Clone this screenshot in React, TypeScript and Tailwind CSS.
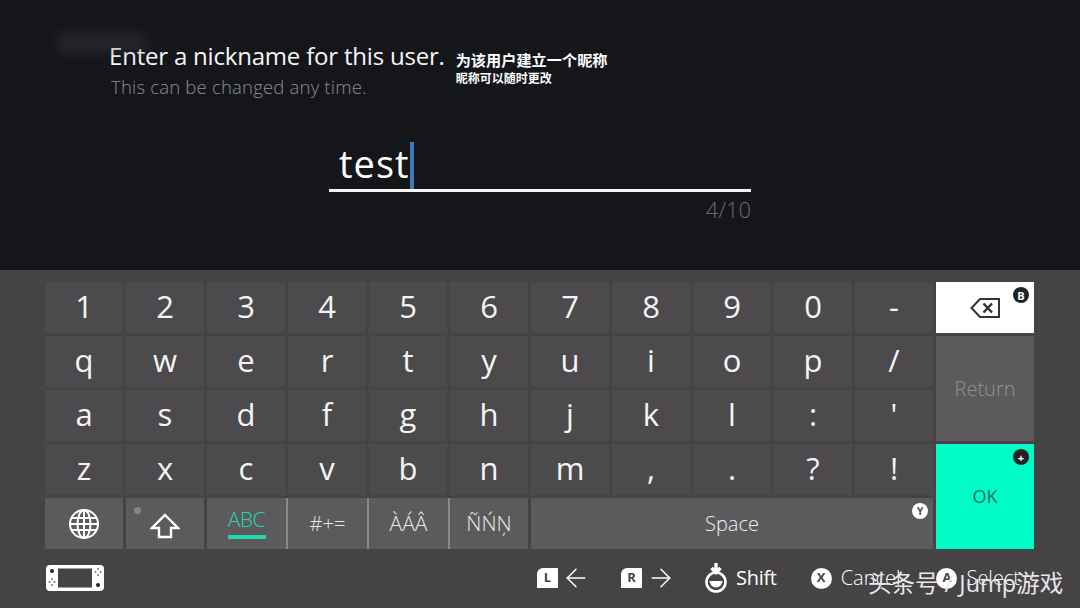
import { ArrowLeft, ArrowRight } from 'lucide-react'
import type { ReactNode } from 'react'

const SANS = "font-['Open_Sans','Noto_Sans_CJK_SC',sans-serif]"

const ROWS = [
  ['1', '2', '3', '4', '5', '6', '7', '8', '9', '0', '-'],
  ['q', 'w', 'e', 'r', 't', 'y', 'u', 'i', 'o', 'p', '/'],
  ['a', 's', 'd', 'f', 'g', 'h', 'j', 'k', 'l', ':', "'"],
  ['z', 'x', 'c', 'v', 'b', 'n', 'm', ',', '.', '?', '!'],
]

function Badge({ children }: { children: ReactNode }) {
  return (
    <span className="absolute top-[5px] right-[5px] w-4 h-4 rounded-full flex items-center justify-center text-[11px] font-bold leading-none bg-[#1c2426] text-white">
      {children}
    </span>
  )
}

function GlobeIcon() {
  return (
    <svg width="30" height="30" viewBox="0 0 30 30" fill="none" stroke="white" strokeWidth="2">
      <circle cx="15" cy="15" r="14" />
      <ellipse cx="15" cy="15" rx="6.5" ry="14" />
      <path d="M15 1v28M2.5 9h25M1 15h28M2.5 21h25" />
    </svg>
  )
}

function ShiftIcon() {
  return (
    <svg width="30" height="26" viewBox="0 0 30 26" fill="none" stroke="white" strokeWidth="2.4">
      <path d="M15 2 L28 15 H21 V24 H9 V15 H2 Z" strokeLinejoin="miter" />
    </svg>
  )
}

function BackspaceIcon() {
  return (
    <svg width="30" height="20" viewBox="0 0 30 20" fill="none" stroke="#333335" strokeWidth="2">
      <path d="M1.5 10 L10 1 H29 V19 H10 Z" strokeLinejoin="miter" />
      <path d="M13.5 5.5 L22 14.5 M22 5.5 L13.5 14.5" strokeWidth="2.4" />
    </svg>
  )
}

function ConsoleIcon() {
  return (
    <svg width="58" height="26" viewBox="0 0 58 26">
      <rect x="0" y="0" width="58" height="26" rx="4" fill="white" />
      <rect x="12" y="3.5" width="34" height="19" fill="#454345" />
      <circle cx="6" cy="6" r="2" fill="#222" />
      <circle cx="52" cy="20" r="2" fill="#222" />
      <g fill="#777">
        <circle cx="6" cy="14" r="1" />
        <circle cx="6" cy="20" r="1" />
        <circle cx="3.5" cy="17" r="1" />
        <circle cx="8.5" cy="17" r="1" />
        <circle cx="52" cy="4" r="1" />
        <circle cx="52" cy="10" r="1" />
        <circle cx="49.5" cy="7" r="1" />
        <circle cx="54.5" cy="7" r="1" />
      </g>
    </svg>
  )
}

function PlusIcon() {
  return (
    <svg width="22" height="30" viewBox="0 0 22 30" fill="none">
      <path d="M11 0v8M6.5 5 11 9.5 15.5 5" stroke="white" strokeWidth="3.4" />
      <circle cx="11" cy="19" r="9.5" stroke="white" strokeWidth="2.6" />
      <path d="M4.5 18a6.5 6.5 0 0 0 13 0z" fill="white" />
    </svg>
  )
}

function Shoulder({ label }: { label: string }) {
  return (
    <span className="w-[21px] h-[20px] bg-white rounded-tl-[6px] rounded-tr-[1px] flex items-center justify-center text-[13px] font-bold text-[#454345]">
      {label}
    </span>
  )
}

function Round({ label }: { label: string }) {
  return (
    <span className="w-[21px] h-[21px] rounded-full bg-white flex items-center justify-center text-[13px] font-bold text-[#454345]">
      {label}
    </span>
  )
}

function ModeKey({ children, className = '' }: { children: ReactNode; className?: string }) {
  return (
    <div className={`h-[51px] w-[81px] bg-[#5c5a5d] flex items-center justify-center text-[#e8e8e8] border-r-2 border-[#8a888b] ${className}`}>
      {children}
    </div>
  )
}

export default function App() {
  return (
    <div className={`relative w-[1080px] h-[608px] overflow-hidden bg-[#454345] text-white ${SANS}`}>
      <div className="relative h-[270px] bg-[#14161a] pt-[38px]">
        <div className="absolute left-[58px] top-[33px] w-[88px] h-5 bg-[#4a4a4a] opacity-30 blur-[6px]" />
        <div className="pl-[109px] flex items-start">
          <div>
            <div className="text-[24px] leading-[36px] tracking-[-0.2px] text-[#f6f6f6]">Enter a nickname for this user.</div>
            <div className="pl-[2px] text-[18.5px] leading-[26px] font-light tracking-[0.2px] text-[#8e8e90]">This can be changed any time.</div>
          </div>
          <div className="ml-[11px] pt-[12px] font-bold">
            <div className="text-[15.2px] leading-[20px]">为该用户建立一个昵称</div>
            <div className="text-[12px] leading-[16px] mt-[1px]">昵称可以随时更改</div>
          </div>
        </div>
        <div className="ml-[329px] mt-[37px] w-[422px]">
          <div className="h-[55px] border-b-[3px] border-[#f4f4f4] pl-[10px] flex items-start">
            <span className="text-[38px] leading-[50px] mt-[1px] tracking-[1px]">test</span>
            <span className="w-[4px] h-[47px] mt-[5px] bg-[#3f7ab5]" />
          </div>
          <div className="mt-[4px] text-right text-[22px] leading-[26px] font-light text-[#6c6c6e]">4/10</div>
        </div>
      </div>

      <div className="pl-[45px] pt-[12px] flex">
        <div className="w-[891px]">
          {ROWS.map((row) => (
            <div key={row[0]} className="flex gap-[3px] mb-[3px]">
              {row.map((k) => (
                <div key={k} className="w-[78px] h-[51px] bg-[#4c4a4c] flex items-center justify-center text-[31px] leading-none pb-[3px] text-[#f4f4f4]">
                  {k}
                </div>
              ))}
            </div>
          ))}
          <div className="flex">
            <div className="w-[78px] h-[51px] mr-[3px] bg-[#5c5a5d] flex items-center justify-center">
              <GlobeIcon />
            </div>
            <div className="relative w-[78px] h-[51px] mr-[3px] bg-[#5c5a5d] flex items-center justify-center pt-[5px] pr-[1px]">
              <span className="absolute left-[8px] top-[9px] w-[7px] h-[7px] rounded-full bg-[#868688]" />
              <ShiftIcon />
            </div>
            <ModeKey>
              <span className="flex flex-col items-center text-[#1fd8ae] text-[21px] leading-[26px] font-light tracking-[-0.5px] -mt-[2px]">
                ABC
                <span className="block w-[38px] h-[4px] mt-[3px] bg-[#1fd8ae]" />
              </span>
            </ModeKey>
            <ModeKey>
              <span className="text-[20px] font-light">#+=</span>
            </ModeKey>
            <ModeKey>
              <span className="text-[21px] font-light">ÀÁÂ</span>
            </ModeKey>
            <div className="h-[51px] w-[78px] mr-[3px] bg-[#5c5a5d] flex items-center justify-center text-[#e8e8e8] text-[21px] font-light">ÑŃŅ</div>
            <div className="relative w-[402px] h-[51px] bg-[#5c5a5d] flex items-center justify-center text-[20px] text-[#f0f0f0] font-light">
              Space
              <span className="absolute top-[5px] right-[5px] w-4 h-4 rounded-full bg-white flex items-center justify-center text-[10px] font-bold leading-none text-[#4a4a4c]">Y</span>
            </div>
          </div>
        </div>
        <div className="w-[98px] flex flex-col gap-[3px]">
          <div className="relative h-[51px] bg-white flex items-center justify-center">
            <BackspaceIcon />
            <Badge>B</Badge>
          </div>
          <div className="h-[105px] bg-[#5c5a5d] flex items-center justify-center text-[20px] font-light text-[#929193]">Return</div>
          <div className="relative h-[105px] bg-[#00fbc6] flex items-center justify-center text-[18px] text-[#146c60]">
            OK
            <Badge>+</Badge>
          </div>
        </div>
      </div>

      <div className="pl-[46px] mt-[13px] h-[32px] flex items-center">
        <ConsoleIcon />
        <div className="ml-[433px] flex items-center">
          <Shoulder label="L" />
          <ArrowLeft size={30} strokeWidth={1.2} className="ml-[3px] text-white" />
        </div>
        <div className="ml-[30px] flex items-center">
          <Shoulder label="R" />
          <ArrowRight size={30} strokeWidth={1.2} className="ml-[4px] text-white" />
        </div>
        <div className="ml-[29px] flex items-center gap-[9px] text-[20px] tracking-[-0.3px]">
          <PlusIcon />
          <span>Shift</span>
        </div>
        <div className="ml-[34px] flex items-center gap-[9px] text-[20px] font-light">
          <Round label="X" />
          <span>Cancel</span>
        </div>
        <div className="ml-[36px] flex items-center gap-[9px] text-[20px] font-light">
          <Round label="A" />
          <span>Select</span>
        </div>
      </div>

      <div className="absolute left-[868px] top-[568px] text-[23.5px] leading-[30px] text-[#e8e8e8] whitespace-nowrap">头条号 / Jump游戏</div>
    </div>
  )
}
